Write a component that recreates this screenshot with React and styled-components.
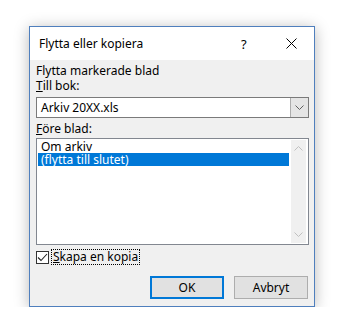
import styled, { createGlobalStyle } from "styled-components";

const GlobalStyle = createGlobalStyle`
    body {
        margin: 0;
        background: #ffffff;
        font-family: "Noto Sans", "Open Sans", sans-serif;
        font-size: 12px;
        color: #000;
    }
`;

export default function App() {
    return (
        <>
            <GlobalStyle />
            <Page>
                <Window>
                    <TitleBar>
                        <Title>Flytta eller kopiera</Title>
                        <HelpButton>?</HelpButton>
                        <CloseButton>
                            <svg width="11" height="11" viewBox="0 0 11 11">
                                <path d="M0.5 0.5 L10.5 10.5 M10.5 0.5 L0.5 10.5" stroke="#000" strokeWidth="1" />
                            </svg>
                        </CloseButton>
                    </TitleBar>
                    <Body>
                        <Label>Flytta markerade blad</Label>
                        <Label><u>T</u>ill bok:</Label>
                        <Combo>
                            <ComboText>Arkiv 20XX.xls</ComboText>
                            <ComboButton>
                                <svg width="9" height="5" viewBox="0 0 9 5">
                                    <path d="M0.5 0.5 L4.5 4.5 L8.5 0.5" stroke="#606060" fill="none" />
                                </svg>
                            </ComboButton>
                        </Combo>
                        <Label $gap={3}><u>F</u>öre blad:</Label>
                        <ListBox>
                            <Items>
                                <Item>Om arkiv</Item>
                                <Item $selected>(flytta till slutet)</Item>
                            </Items>
                            <ScrollBar>
                                <svg width="9" height="5" viewBox="0 0 9 5">
                                    <path d="M0.5 4.5 L4.5 0.5 L8.5 4.5" stroke="#c0c0c0" fill="none" />
                                </svg>
                                <svg width="9" height="5" viewBox="0 0 9 5">
                                    <path d="M0.5 0.5 L4.5 4.5 L8.5 0.5" stroke="#c0c0c0" fill="none" />
                                </svg>
                            </ScrollBar>
                        </ListBox>
                        <CheckRow>
                            <Box>
                                <svg width="11" height="11" viewBox="0 0 11 11">
                                    <path d="M1 5.5 L4 8.5 L10 2" stroke="#222" strokeWidth="1.1" fill="none" />
                                </svg>
                            </Box>
                            <CheckLabel><u>S</u>kapa en kopia</CheckLabel>
                        </CheckRow>
                        <Buttons>
                            <Button $primary>OK</Button>
                            <Button>Avbryt</Button>
                        </Buttons>
                    </Body>
                </Window>
            </Page>
        </>
    );
}

const Page = styled.div`
    padding: 26px 0 0 29px;
`;

const Window = styled.div`
    width: 284px;
    border: 1px solid #4f7fbd;
    box-shadow: 0 2px 14px rgba(0, 0, 0, 0.28);
    display: flex;
    flex-direction: column;
`;

const TitleBar = styled.div`
    height: 33px;
    background: #ffffff;
    display: flex;
    align-items: center;
    padding-left: 9px;
`;

const Title = styled.div`
    flex: 1;
    font-size: 12px;
`;

const HelpButton = styled.div`
    font-size: 13px;
    width: 10px;
    margin-right: 35px;
`;

const CloseButton = styled.div`
    display: flex;
    margin-right: 17px;
`;

const Body = styled.div`
    background: #f0f0f0;
    padding: 3px 5px 7px 6px;
    display: flex;
    flex-direction: column;
`;

const Label = styled.div`
    line-height: 15px;
    margin-top: ${(p) => p.$gap || 0}px;
`;

const Combo = styled.div`
    margin-top: 4px;
    height: 21px;
    border: 1px solid #7a7a7a;
    background: #ffffff;
    display: flex;
    box-sizing: border-box;
`;

const ComboText = styled.div`
    flex: 1;
    padding-left: 4px;
    line-height: 19px;
`;

const ComboButton = styled.div`
    width: 17px;
    background: #e5e5e5;
    border-left: 1px solid #adadad;
    display: flex;
    align-items: center;
    justify-content: center;
`;

const ListBox = styled.div`
    margin-top: 2px;
    height: 107px;
    border: 1px solid #828790;
    background: #ffffff;
    display: flex;
    box-sizing: border-box;
`;

const Items = styled.div`
    flex: 1;
    padding: 1px 2px 0 1px;
`;

const Item = styled.div`
    line-height: 13px;
    padding-left: 3px;
    background: ${(p) => (p.$selected ? "#0078d7" : "transparent")};
    color: ${(p) => (p.$selected ? "#ffffff" : "#000000")};
`;

const ScrollBar = styled.div`
    width: 15px;
    margin: 1px 2px 1px 0;
    background: #f0f0f0;
    display: flex;
    flex-direction: column;
    align-items: center;
    justify-content: space-between;
    padding: 6px 0;
`;

const CheckRow = styled.div`
    margin-top: 4px;
    display: flex;
    align-items: center;
    gap: 2px;
`;

const Box = styled.div`
    width: 13px;
    height: 13px;
    box-sizing: border-box;
    border: 1px solid #333333;
    background: #ffffff;
    display: flex;
    align-items: center;
    justify-content: center;
`;

const CheckLabel = styled.div`
    border: 1px dotted #000;
    line-height: 14px;
    padding: 0 1px;
`;

const Buttons = styled.div`
    margin-top: 11px;
    display: flex;
    justify-content: flex-end;
    gap: 10px;
    padding-right: 1px;
`;

const Button = styled.div`
    width: 74px;
    height: 23px;
    box-sizing: border-box;
    background: #e1e1e1;
    border: ${(p) => (p.$primary ? "2px solid #0078d7" : "1px solid #adadad")};
    display: flex;
    align-items: center;
    justify-content: center;
`;
